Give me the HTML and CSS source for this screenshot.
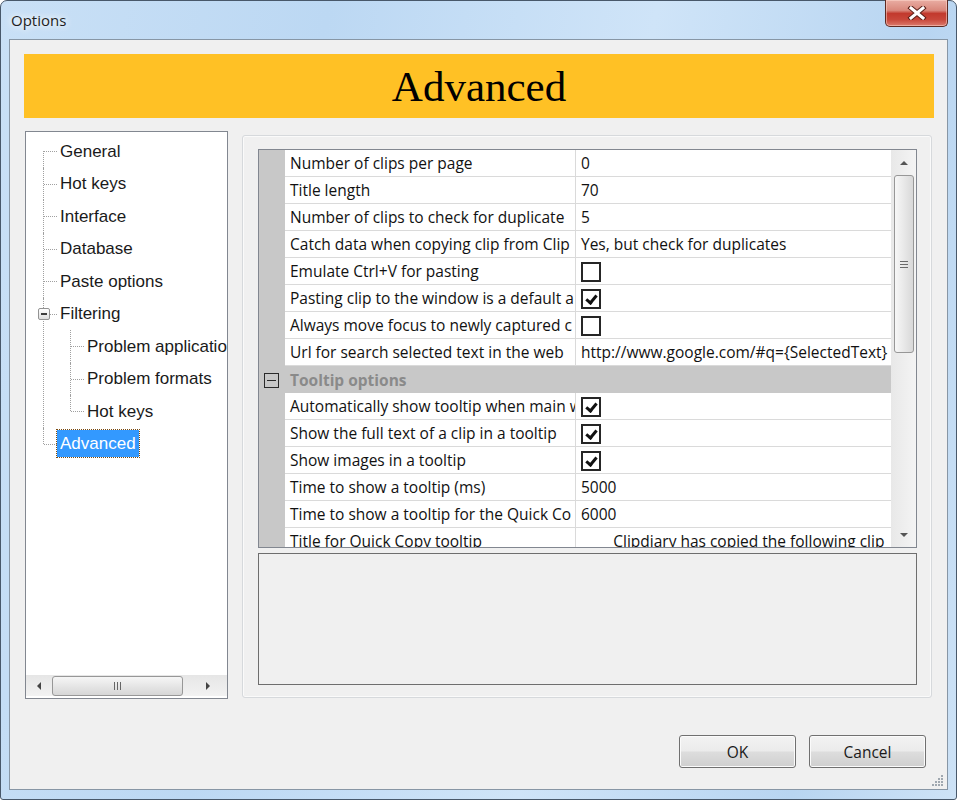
FILE: index.html
```html
<!DOCTYPE html>
<html lang="en">
<head>
<meta charset="UTF-8">
<title>Options</title>
<link rel="stylesheet" href="styles.css">
</head>
<body>
<div class="window">
  <div class="titlebar">
    <span class="title">Options</span>
    <button class="close" aria-label="Close">
      <svg width="20" height="14" viewBox="0 0 20 14">
        <path d="M4 2 L16 12 M16 2 L4 12" stroke="#5a1f18" stroke-width="5" stroke-linecap="square"/>
        <path d="M4 2 L16 12 M16 2 L4 12" stroke="#fff" stroke-width="3" stroke-linecap="square"/>
      </svg>
    </button>
  </div>
  <div class="client">
    <div class="banner">Advanced</div>
    <div class="main">
      <div class="tree">
        <ul class="tree-list">
          <li><div class="node"><span class="label">General</span></div></li>
          <li><div class="node"><span class="label">Hot keys</span></div></li>
          <li><div class="node"><span class="label">Interface</span></div></li>
          <li><div class="node"><span class="label">Database</span></div></li>
          <li><div class="node"><span class="label">Paste options</span></div></li>
          <li>
            <div class="node"><span class="toggle"></span><span class="label">Filtering</span></div>
            <ul>
              <li><div class="node"><span class="label">Problem applicatio</span></div></li>
              <li><div class="node"><span class="label">Problem formats</span></div></li>
              <li><div class="node"><span class="label">Hot keys</span></div></li>
            </ul>
          </li>
          <li><div class="node"><span class="label selected">Advanced</span></div></li>
        </ul>
        <div class="hscroll">
          <svg class="arrow" width="8" height="10" viewBox="0 0 8 10"><path d="M6 1 L2 5 L6 9 Z" fill="#444"/></svg>
          <div class="hthumb"><span class="grip-v"></span></div>
          <svg class="arrow" width="8" height="10" viewBox="0 0 8 10"><path d="M2 1 L6 5 L2 9 Z" fill="#444"/></svg>
        </div>
      </div>

      <div class="panel">
        <div class="grid">
          <div class="grid-body">
            <div class="row"><div class="gutter"></div><div class="name">Number of clips per page</div><div class="value">0</div></div>
            <div class="row"><div class="gutter"></div><div class="name">Title length</div><div class="value">70</div></div>
            <div class="row"><div class="gutter"></div><div class="name">Number of clips to check for duplicate</div><div class="value">5</div></div>
            <div class="row"><div class="gutter"></div><div class="name">Catch data when copying clip from Clip</div><div class="value">Yes, but check for duplicates</div></div>
            <div class="row"><div class="gutter"></div><div class="name">Emulate Ctrl+V for pasting</div><div class="value"><span class="check"></span></div></div>
            <div class="row"><div class="gutter"></div><div class="name">Pasting clip to the window is a default a</div><div class="value"><span class="check on"></span></div></div>
            <div class="row"><div class="gutter"></div><div class="name">Always move focus to newly captured c</div><div class="value"><span class="check"></span></div></div>
            <div class="row"><div class="gutter"></div><div class="name">Url for search selected text in the web</div><div class="value">http://www.google.com/#q={SelectedText}</div></div>
            <div class="row category"><div class="gutter"><span class="cat-toggle"></span></div><div class="cat-name">Tooltip options</div></div>
            <div class="row"><div class="gutter"></div><div class="name">Automatically show tooltip when main w</div><div class="value"><span class="check on"></span></div></div>
            <div class="row"><div class="gutter"></div><div class="name">Show the full text of a clip in a tooltip</div><div class="value"><span class="check on"></span></div></div>
            <div class="row"><div class="gutter"></div><div class="name">Show images in a tooltip</div><div class="value"><span class="check on"></span></div></div>
            <div class="row"><div class="gutter"></div><div class="name">Time to show a tooltip (ms)</div><div class="value">5000</div></div>
            <div class="row"><div class="gutter"></div><div class="name">Time to show a tooltip for the Quick Co</div><div class="value">6000</div></div>
            <div class="row"><div class="gutter"></div><div class="name">Title for Quick Copy tooltip</div><div class="value pre">        Clipdiary has copied the following clip</div></div>
          </div>
          <div class="vscroll">
            <div class="vbtn"><svg width="10" height="6" viewBox="0 0 10 6"><path d="M1 5 L5 1 L9 5 Z" fill="#555"/></svg></div>
            <div class="vthumb"><span class="grip-h"></span></div>
            <div class="vtrack"></div>
            <div class="vbtn"><svg width="10" height="6" viewBox="0 0 10 6"><path d="M1 1 L5 5 L9 1 Z" fill="#555"/></svg></div>
          </div>
        </div>
        <div class="desc"></div>
      </div>
    </div>
    <div class="buttons">
      <button class="btn">OK</button>
      <button class="btn">Cancel</button>
    </div>
    <svg class="sizegrip" width="12" height="12" viewBox="0 0 12 12">
      <g fill="#a0a8b0">
        <rect x="9" y="1" width="2" height="2"/>
        <rect x="6" y="4" width="2" height="2"/><rect x="9" y="4" width="2" height="2"/>
        <rect x="3" y="7" width="2" height="2"/><rect x="6" y="7" width="2" height="2"/><rect x="9" y="7" width="2" height="2"/>
        <rect x="0" y="10" width="2" height="2"/><rect x="3" y="10" width="2" height="2"/><rect x="6" y="10" width="2" height="2"/><rect x="9" y="10" width="2" height="2"/>
      </g>
    </svg>
  </div>
</div>
</body>
</html>
```

FILE: styles.css
```css
/* Options dialog */
* {
  box-sizing: border-box;
}

body {
  margin: 0;
  font-family: "Open Sans", sans-serif;
  background: #fff;
}

.window {
  width: 957px;
  height: 800px;
  display: flex;
  flex-direction: column;
  padding: 0 8px 9px 8px;
  border: 1px solid #48586a;
  border-radius: 7px 7px 3px 3px;
  background: linear-gradient(100deg, #c9e0f6 0%, #bcd8f3 30%, #cfe4f8 60%, #b8d5f1 85%, #cde2f6 100%);
}

.titlebar {
  height: 38px;
  flex: none;
  display: flex;
  justify-content: space-between;
  align-items: flex-start;
}

.title {
  margin: 9px 0 0 2px;
  font-size: 15px;
  color: #1e1e1e;
  text-shadow: 0 0 6px #fff, 0 0 10px #fff;
}

.close {
  margin-top: -1px;
  width: 63px;
  height: 27px;
  padding: 0;
  border: 1px solid #5e2a22;
  border-top: none;
  border-radius: 0 0 5px 5px;
  background: linear-gradient(#e9ada3 0%, #d9877b 40%, #c2392d 52%, #c8473a 75%, #db7a6c 100%);
  box-shadow: inset 0 0 0 1px rgba(255, 220, 210, 0.5);
  display: flex;
  align-items: center;
  justify-content: center;
}

.client {
  position: relative;
  flex: 1;
  display: flex;
  flex-direction: column;
  border: 1px solid #8796a5;
  background: #f0f0f0;
}

.banner {
  margin: 14px 13px 0 14px;
  height: 64px;
  display: flex;
  align-items: center;
  justify-content: center;
  background: #ffc125;
  font-family: "Liberation Serif", serif;
  font-size: 43px;
  color: #000;
}

.main {
  display: flex;
  align-items: flex-start;
  gap: 14px;
  margin: 13px 15px 0 15px;
}

/* tree view */
.tree {
  width: 203px;
  height: 568px;
  flex: none;
  display: flex;
  flex-direction: column;
  padding-bottom: 2px;
  border: 1px solid #828790;
  background: #fff;
  overflow: hidden;
  font-family: "Liberation Sans", sans-serif;
  font-size: 17px;
  color: #1a1a1a;
}

.tree-list {
  flex: 1;
  margin: 0;
  padding: 3px 0 0 17px;
  list-style: none;
}

.tree-list ul {
  margin: 0;
  padding: 0 0 0 27px;
  list-style: none;
}

.tree-list li {
  position: relative;
}

.tree-list li::before {
  content: "";
  position: absolute;
  left: 0;
  top: 0;
  bottom: 0;
  border-left: 1px dotted #a0a0a0;
}

.tree-list > li:first-child::before {
  top: 16px;
}

.tree-list li:last-child::before {
  bottom: auto;
  height: 16px;
}

.node {
  position: relative;
  height: 32.5px;
  display: flex;
  align-items: center;
  padding-left: 14px;
  white-space: nowrap;
}

.node::before {
  content: "";
  position: absolute;
  left: 1px;
  top: 16px;
  width: 13px;
  border-top: 1px dotted #a0a0a0;
}

.label {
  padding: 0 3px;
  line-height: 27px;
}

.label.selected {
  background: #3399ff;
  color: #fff;
  outline: 1px dotted #7a4a10;
}

.toggle {
  position: absolute;
  left: -5px;
  top: 10px;
  width: 12px;
  height: 12px;
  border: 1px solid #939393;
  border-radius: 2px;
  background: linear-gradient(#fff, #dedede);
  z-index: 1;
}

.toggle::after {
  content: "";
  position: absolute;
  left: 2px;
  top: 4px;
  width: 6px;
  height: 2px;
  background: #3d3d3d;
}

.hscroll {
  height: 21px;
  flex: none;
  display: flex;
  align-items: center;
  background: linear-gradient(#e6e6e6, #f2f2f2);
  padding: 0 0 0 9px;
}

.hscroll .arrow {
  flex: none;
}

.hthumb {
  width: 131px;
  height: 20px;
  margin: 0 21px 0 9px;
  border: 1px solid #979797;
  border-radius: 3px;
  background: linear-gradient(#f6f6f6, #e6e6e6 50%, #d6d6d6);
  display: flex;
  align-items: center;
  justify-content: center;
}

.grip-v {
  width: 7px;
  height: 8px;
  background: repeating-linear-gradient(90deg, #666 0 1px, transparent 1px 3px);
}

/* right panel */
.panel {
  width: 690px;
  height: 563px;
  flex: none;
  margin-top: 4px;
  display: flex;
  flex-direction: column;
  gap: 5px;
  padding: 13px 14px 12px 15px;
  border: 1px solid #d6d9dc;
  border-radius: 3px;
  box-shadow: inset 0 0 0 1px #fafafa;
}

.grid {
  height: 399px;
  flex: none;
  display: flex;
  border: 1px solid #828790;
  background: #fff;
}

.grid-body {
  flex: 1;
  overflow: hidden;
  font-size: 15.5px;
  color: #111;
}

.row {
  display: flex;
  height: 27px;
}

.gutter {
  width: 26px;
  flex: none;
  background: #c8c8c8;
  display: flex;
  align-items: center;
}

.name,
.value {
  display: flex;
  align-items: center;
  padding-left: 5px;
  white-space: nowrap;
  overflow: hidden;
  border-bottom: 1px solid #dadada;
}

.name {
  width: 291px;
  flex: none;
  border-right: 1px solid #dadada;
}

.value {
  flex: 1;
}

.value.pre {
  white-space: pre;
}

.row.category {
  background: #c8c8c8;
}

.cat-name {
  padding-left: 5px;
  display: flex;
  align-items: center;
  font-weight: bold;
  color: #8a8a8a;
}

.cat-toggle {
  position: relative;
  width: 15px;
  height: 15px;
  margin: 1px 0 0 5px;
  border: 1px solid #2a2a2a;
}

.cat-toggle::after {
  content: "";
  position: absolute;
  left: 2px;
  top: 6px;
  width: 9px;
  height: 1px;
  background: #2a2a2a;
}

.check {
  position: relative;
  width: 20px;
  height: 20px;
  margin-top: 1px;
  border: 2px solid #262626;
  background: #fff;
}

.check.on::after {
  content: "";
  position: absolute;
  left: 5px;
  top: 2px;
  width: 4px;
  height: 8px;
  border: solid #111;
  border-width: 0 3px 3px 0;
  transform: rotate(40deg);
}

.vscroll {
  width: 25px;
  flex: none;
  display: flex;
  flex-direction: column;
  align-items: center;
  background: linear-gradient(90deg, #e8e8e8, #f4f4f4);
}

.vbtn {
  height: 25px;
  flex: none;
  display: flex;
  align-items: center;
  justify-content: center;
}

.vthumb {
  width: 20px;
  height: 178px;
  flex: none;
  margin-left: 1px;
  border: 1px solid #979797;
  border-radius: 3px;
  background: linear-gradient(90deg, #f7f7f7, #e8e8e8 50%, #d8d8d8);
  display: flex;
  align-items: center;
  justify-content: center;
}

.grip-h {
  width: 8px;
  height: 7px;
  background: repeating-linear-gradient(#6a6a6a 0 1px, transparent 1px 3px);
}

.vtrack {
  flex: 1;
}

.desc {
  flex: 1;
  border: 1px solid #6e6e6e;
  background: #f0f0f0;
}

/* buttons */
.buttons {
  margin-top: auto;
  display: flex;
  justify-content: flex-end;
  gap: 13px;
  padding: 0 21px 21px 0;
}

.btn {
  width: 117px;
  height: 33px;
  border: 1px solid #707070;
  border-radius: 3px;
  background: linear-gradient(#f3f3f3, #ebebeb 48%, #dddddd 52%, #cfcfcf);
  box-shadow: inset 0 0 0 1px #fbfbfb;
  font-family: "Open Sans", sans-serif;
  font-size: 15.5px;
  color: #1a1a1a;
}

.sizegrip {
  position: absolute;
  right: 3px;
  bottom: 3px;
}
```
